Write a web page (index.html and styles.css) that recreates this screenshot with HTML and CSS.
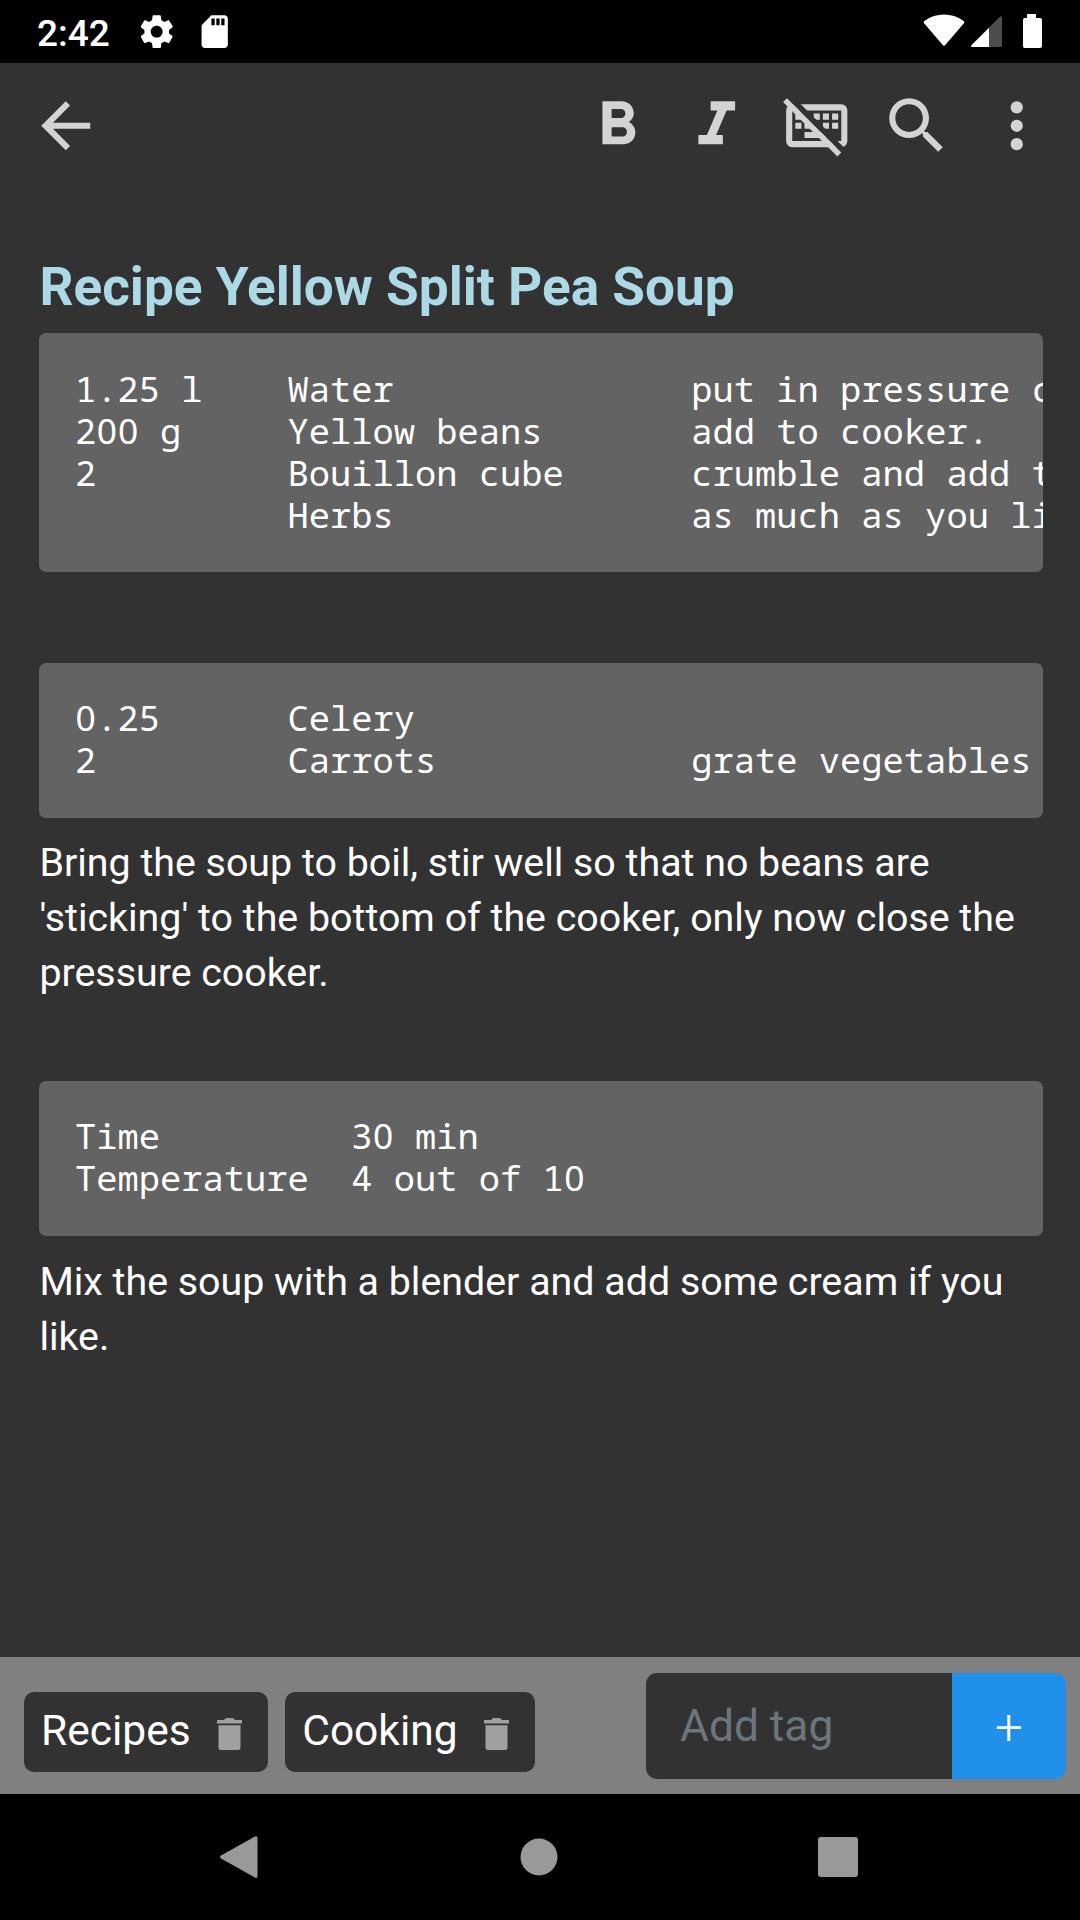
FILE: index.html
```html
<!DOCTYPE html>
<html lang="en">
<head>
<meta charset="utf-8">
<title>Recipe Yellow Split Pea Soup</title>
<link rel="stylesheet" href="styles.css">
</head>
<body>
<div class="statusbar">
  <span class="clock">2:42</span>
  <svg class="status-gear" viewBox="0 0 24 24"><path d="M19.43 12.98c.04-.32.07-.64.07-.98s-.03-.66-.07-.98l2.11-1.65c.19-.15.24-.42.12-.64l-2-3.46c-.12-.22-.39-.3-.61-.22l-2.49 1c-.52-.4-1.08-.73-1.69-.98l-.38-2.65C14.46 2.18 14.25 2 14 2h-4c-.25 0-.46.18-.49.42l-.38 2.65c-.61.25-1.17.59-1.69.98l-2.49-1c-.23-.09-.49 0-.61.22l-2 3.46c-.13.22-.07.49.12.64l2.11 1.65c-.04.32-.07.65-.07.98s.03.66.07.98l-2.11 1.65c-.19.15-.24.42-.12.64l2 3.46c.12.22.39.3.61.22l2.49-1c.52.4 1.08.73 1.69.98l.38 2.65c.03.24.24.42.49.42h4c.25 0 .46-.18.49-.42l.38-2.65c.61-.25 1.17-.59 1.69-.98l2.49 1c.23.09.49 0 .61-.22l2-3.46c.12-.22.07-.49-.12-.64l-2.11-1.65zM12 15.6c-1.98 0-3.6-1.62-3.6-3.6s1.62-3.6 3.6-3.6 3.6 1.62 3.6 3.6-1.62 3.6-3.6 3.6z"/></svg>
  <svg class="status-card" viewBox="0 0 24 24"><path d="M18 2h-8L4.02 8 4 20c0 1.1.9 2 2 2h12c1.1 0 2-.9 2-2V4c0-1.1-.9-2-2-2zm-6 6h-2V4h2v4zm3 0h-2V4h2v4zm3 0h-2V4h2v4z"/></svg>
  <svg class="status-right" viewBox="0 0 120 36" width="120" height="36">
    <path d="M1.3 9.6Q0 8 1.6 6.8C13-1.7 29-1.7 40.400 6.8Q42 8 40.700 9.600L22.300 31Q21 32.500 19.700 31Z"/>
    <path class="dim" d="M65 14.700L76.500 2.900Q79 1 79 4V31.500Q79 33 77.500 33H65Z"/>
    <path d="M66 13.700V33H49.500Q47 33 48.600 31Z"/>
    <path d="M104 0h9v4h4q2 0 2 2v26q0 2-2 2h-15.500q-1.500 0-1.500-2v-26q0-2 1.500-2h2.500z"/>
  </svg>
</div>
<header class="toolbar">
  <svg class="icon back" viewBox="0 0 24 24"><path d="M20 11H7.830l5.590-5.590L12 4l-8 8 8 8 1.410-1.410L7.830 13H20z"/></svg>
  <div class="actions">
    <svg class="icon" viewBox="0 0 24 24"><path d="M15.600 10.790c.97-.67 1.650-1.770 1.650-2.790 0-2.260-1.750-4-4-4H7v14h7.040c2.090 0 3.710-1.700 3.710-3.790 0-1.520-.86-2.820-2.150-3.420zM10 6.500h3c.83 0 1.500.67 1.500 1.500s-.67 1.500-1.500 1.500h-3v-3zm3.500 9H10v-3h3.500c.83 0 1.500.67 1.500 1.500s-.67 1.500-1.500 1.500z"/></svg>
    <svg class="icon" viewBox="0 0 24 24"><path d="M10 4v3h2.210l-3.420 8H6v3h8v-3h-2.210l3.420-8H18V4z"/></svg>
    <svg class="icon keyboard" viewBox="0 0 24 24">
      <clipPath id="gap"><path d="M1.820 0H24V22.180Z M-.72 0L23.280 24H0V0Z"/></clipPath>
      <g clip-path="url(#gap)"><path fill-rule="evenodd" d="M4 5H20a2 2 0 0 1 2 2V17a2 2 0 0 1-2 2H4a2 2 0 0 1-2-2V7a2 2 0 0 1 2-2ZM4 7V17H20V7Z"/><path d="M5 8h2v2H5zM11 8h2v2h-2zM14 8h2v2h-2zM17 8h2v2h-2zM5 11h2v2H5zM8 11h2v2H8zM14 11h2v2h-2zM17 11h2v2h-2zM8 14h7.500v2H8z"/></g>
      <path d="M1 4.270L2.280 3 20 20.720 18.730 22z"/>
    </svg>
    <svg class="icon" viewBox="0 0 24 24"><path d="M9.500 3A6.500 6.500 0 0 1 16 9.500C16 11.110 15.410 12.590 14.440 13.730L14.710 14H15.500L20.500 19L19 20.500L14 15.500V14.710L13.730 14.440C12.590 15.410 11.110 16 9.500 16A6.500 6.500 0 0 1 3 9.500A6.500 6.500 0 0 1 9.500 3M9.500 5C7 5 5 7 5 9.500C5 12 7 14 9.500 14C12 14 14 12 14 9.500C14 7 12 5 9.500 5Z"/></svg>
    <svg class="icon" viewBox="0 0 24 24"><circle cx="12" cy="6" r="2"/><circle cx="12" cy="12" r="2"/><circle cx="12" cy="18" r="2"/></svg>
  </div>
</header>
<main class="note">
  <h1>Recipe Yellow Split Pea Soup</h1>
<pre class="ingredients">1.25 l    Water              put in pressure cooker
2<span class="zero">0</span><span class="zero">0</span> g     Yellow beans       add to cooker.
2         Bouillon cube      crumble and add to cooker
          Herbs              as much as you like</pre>
<pre class="spaced"><span class="zero">0</span>.25      Celery
2         Carrots            grate vegetables</pre>
  <p>Bring the soup to boil, stir well so that no beans are 'sticking' to the bottom of the cooker, only now close the pressure cooker.</p>
<pre class="settings">Time         3<span class="zero">0</span> min
Temperature  4 out of 1<span class="zero">0</span></pre>
  <p class="last">Mix the soup with a blender and add some cream if you like.</p>
</main>
<footer class="tagbar">
  <span class="tag">Recipes <svg class="trash" viewBox="0 0 25 32"><path d="M0 2H7Q8 0 10 0H15Q17 0 18 2H25V5.500H0ZM1.500 7.300H23.500V29.500Q23.500 32 21 32H4Q1.500 32 1.500 29.500Z"/></svg></span>
  <span class="tag">Cooking <svg class="trash" viewBox="0 0 25 32"><path d="M0 2H7Q8 0 10 0H15Q17 0 18 2H25V5.500H0ZM1.500 7.300H23.500V29.500Q23.500 32 21 32H4Q1.500 32 1.500 29.500Z"/></svg></span>
  <div class="addtag"><input type="text" placeholder="Add tag" aria-label="Add tag"><button type="button">+</button></div>
</footer>
<nav class="navbar">
  <svg viewBox="0 0 48 48"><path d="M38.500 3.800Q41.500 2 41.500 5V43Q41.500 46 38.500 44.200L5 25.500Q3 24 5 22.500Z"/></svg>
  <svg viewBox="0 0 48 48"><circle cx="24" cy="24" r="18.500"/></svg>
  <svg viewBox="0 0 48 48"><rect x="4" y="4" width="40" height="40" rx="3"/></svg>
</nav>
</body>
</html>
```
FILE: styles.css
```css
* { box-sizing: border-box; }
body {
  margin: 0;
  width: 1080px;
  height: 1920px;
  display: flex;
  flex-direction: column;
  overflow: hidden;
  background: #323232;
  color: #fff;
  font-family: Roboto, sans-serif;
}
svg { display: block; flex: none; }

.statusbar {
  height: 63px;
  flex: none;
  display: flex;
  align-items: flex-start;
  padding: 12px 37.4px 0 37px;
  background: #000;
  fill: #fff;
}
.clock { width: 100px; font-size: 37px; font-weight: 500; line-height: 43px; }
.status-gear, .status-card { width: 39.4px; height: 39.4px; }
.status-card { margin-left: 19px; }
.status-right { margin: 2px 0 0 auto; }
.dim { fill: #4d4d4d; }

.toolbar {
  height: 126px;
  flex: none;
  display: flex;
  align-items: center;
  justify-content: space-between;
  padding: 0 27px 0 29px;
  fill: #d3d3d3;
}
.icon { width: 73.5px; height: 73.5px; }
.actions { display: flex; gap: 26.25px; }

.note { flex: 1; min-height: 0; padding: 65px 37px 0 39px; }
h1 {
  margin: 0;
  padding-left: .4px;
  font-size: 53.16px;
  font-weight: 700;
  line-height: 66px;
  color: #add8e6;
}
pre {
  margin: 0;
  padding: 33px 36px 38px;
  border-radius: 7px;
  background: #636363;
  overflow: hidden;
  font-family: "Droid Sans Mono", "Noto Sans Mono", "DejaVu Sans Mono", monospace;
  font-size: 35.4375px;
  line-height: 42px;
}
.zero { margin-left: .014em; letter-spacing: .014em; font-family: "Noto Sans", sans-serif; line-height: 1; }
.ingredients { margin-top: 13px; padding: 34px 36px 37px; }
.spaced { margin-top: 91px; }
.settings { margin-top: 81px; }
p { margin: 17px 0 0; padding-left: .4px; font-size: 39.375px; line-height: 55px; }
.last { margin-top: 18px; }

.tagbar {
  height: 137px;
  flex: none;
  display: flex;
  align-items: center;
  gap: 17px;
  padding: 0 14px 0 24px;
  background: #808080;
}
.tag {
  height: 80px;
  display: flex;
  align-items: center;
  gap: 26.5px;
  margin-top: 12px;
  padding: 0 26px 2px 17px;
  border-radius: 10px;
  background: #323232;
  font-size: 42.525px;
}
.trash { width: 25px; height: 32px; margin-top: 6px; fill: #a0a0a0; }
.addtag {
  width: 420px;
  height: 106px;
  display: flex;
  margin: 0 0 0 auto;
  border-radius: 11px;
  overflow: hidden;
}
.addtag input {
  width: 306px;
  border: 0;
  padding: 0 34px;
  background: #323232;
  color: #fff;
  font: 44.3px Roboto, sans-serif;
}
.addtag input::placeholder { color: #6c757d; opacity: 1; }
.addtag button {
  flex: 1;
  border: 0;
  padding: 3px 0 0;
  background: #2190ea;
  color: #fff;
  font: 350 49.5px Roboto, sans-serif;
}

.navbar {
  height: 126px;
  flex: none;
  display: flex;
  align-items: center;
  gap: 251px;
  padding-left: 215.5px;
  background: #000;
  fill: #999;
}
.navbar svg { width: 48px; height: 48px; }
```
